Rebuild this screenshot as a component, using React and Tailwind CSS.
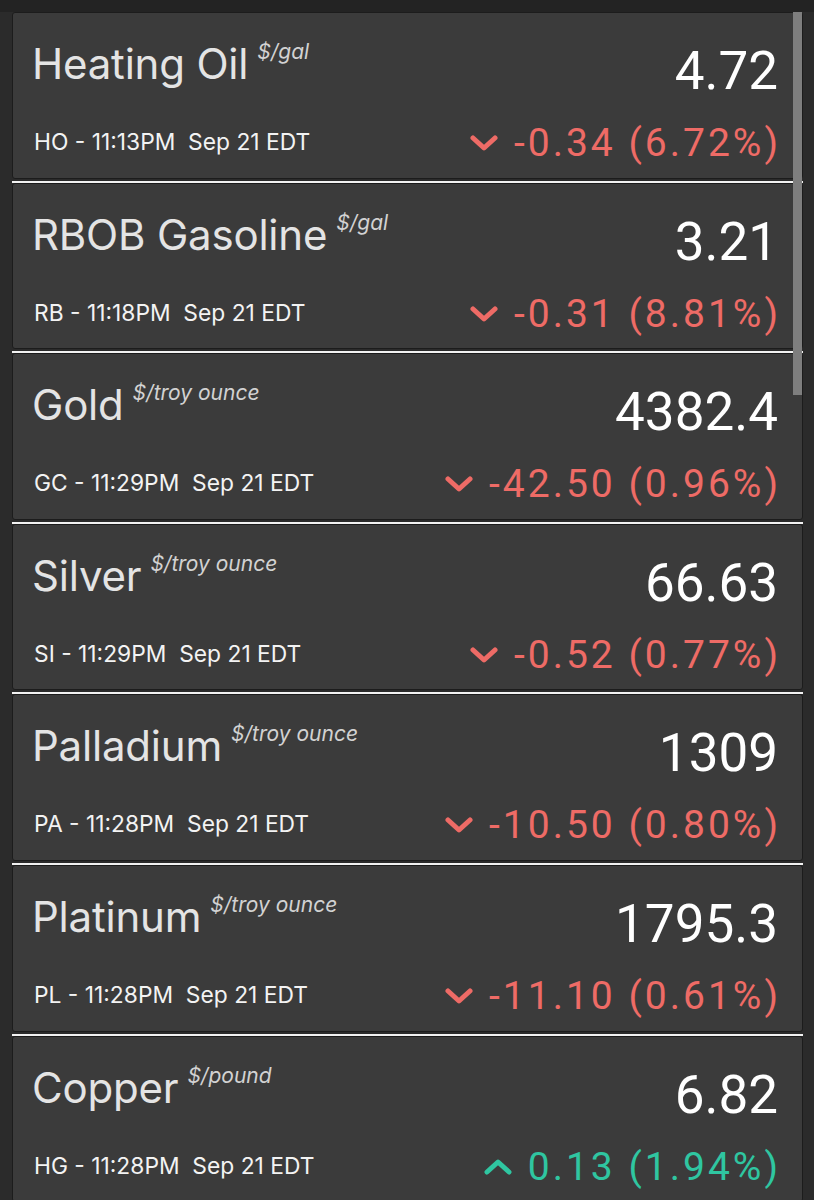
import React from 'react';

const ROWS = [
  { name: 'Heating Oil', unit: '$/gal', code: 'HO', time: '11:13PM', price: '4.72', change: '-0.34 (6.72%)', up: false },
  { name: 'RBOB Gasoline', unit: '$/gal', code: 'RB', time: '11:18PM', price: '3.21', change: '-0.31 (8.81%)', up: false },
  { name: 'Gold', unit: '$/troy ounce', code: 'GC', time: '11:29PM', price: '4382.4', change: '-42.50 (0.96%)', up: false },
  { name: 'Silver', unit: '$/troy ounce', code: 'SI', time: '11:29PM', price: '66.63', change: '-0.52 (0.77%)', up: false },
  { name: 'Palladium', unit: '$/troy ounce', code: 'PA', time: '11:28PM', price: '1309', change: '-10.50 (0.80%)', up: false },
  { name: 'Platinum', unit: '$/troy ounce', code: 'PL', time: '11:28PM', price: '1795.3', change: '-11.10 (0.61%)', up: false },
  { name: 'Copper', unit: '$/pound', code: 'HG', time: '11:28PM', price: '6.82', change: '0.13 (1.94%)', up: true },
];

function Chevron({ up }) {
  return (
    <svg width="28" height="18" viewBox="0 0 28 18" className="shrink-0">
      <path
        d={up ? 'M3 14 L14 4 L25 14' : 'M3 4 L14 14 L25 4'}
        fill="none"
        stroke="currentColor"
        strokeWidth="5"
        strokeLinecap="round"
        strokeLinejoin="round"
      />
    </svg>
  );
}

function QuoteCard({ row }) {
  const tone = row.up ? 'text-[#2fc6a1]' : 'text-[#ee6b66]';
  return (
    <div className="h-[166.6px] flex justify-between rounded-[3px] border border-[#1c1c1c] bg-[#3b3b3b]">
      <div className="flex flex-col pl-[19px] pt-[30px]" style={{ fontFamily: 'Inter, "Noto Sans", sans-serif' }}>
        <div className="flex items-start">
          <span className="text-[42px] leading-[42px] text-[#e4e4e4] tracking-[-0.2px]">{row.name}</span>
          <span className="ml-[9px] -mt-[2px] text-[21px] leading-[22px] italic text-[#d2d2d2]">{row.unit}</span>
        </div>
        <div className="mt-[45px] pl-[2px] text-[22.8px] leading-[23px] text-[#f3f3f3] whitespace-pre">
          {`${row.code} - ${row.time}  Sep 21 EDT`}
        </div>
      </div>
      <div className="flex flex-col items-end pr-[24px] pt-[32px]" style={{ fontFamily: 'Roboto, "Liberation Sans", sans-serif' }}>
        <div className="text-[53px] leading-[53px] text-white">{row.price}</div>
        <div className={`mt-[26px] flex items-center gap-[16px] text-[39px] leading-[38px] tracking-[3px] ${tone}`}>
          <Chevron up={row.up} />
          <span className="-mr-[3px]">{row.change}</span>
        </div>
      </div>
    </div>
  );
}

export default function App() {
  return (
    <div className="relative w-[814px] h-[1200px] overflow-hidden bg-[#2b2b2b]">
      <div className="h-[12px] bg-[#232323]" />
      <div className="flex flex-col pl-[12px] pr-[11px]">
        {ROWS.map((row) => (
          <div key={row.code} className="flex flex-col">
            <QuoteCard row={row} />
            <div className="mt-[2px] h-[2px] bg-[#f2f2f2]" />
          </div>
        ))}
      </div>
      <div className="absolute left-[793px] top-[12px] w-[9px] h-[383px] bg-[#7e7e7e]" />
    </div>
  );
}
